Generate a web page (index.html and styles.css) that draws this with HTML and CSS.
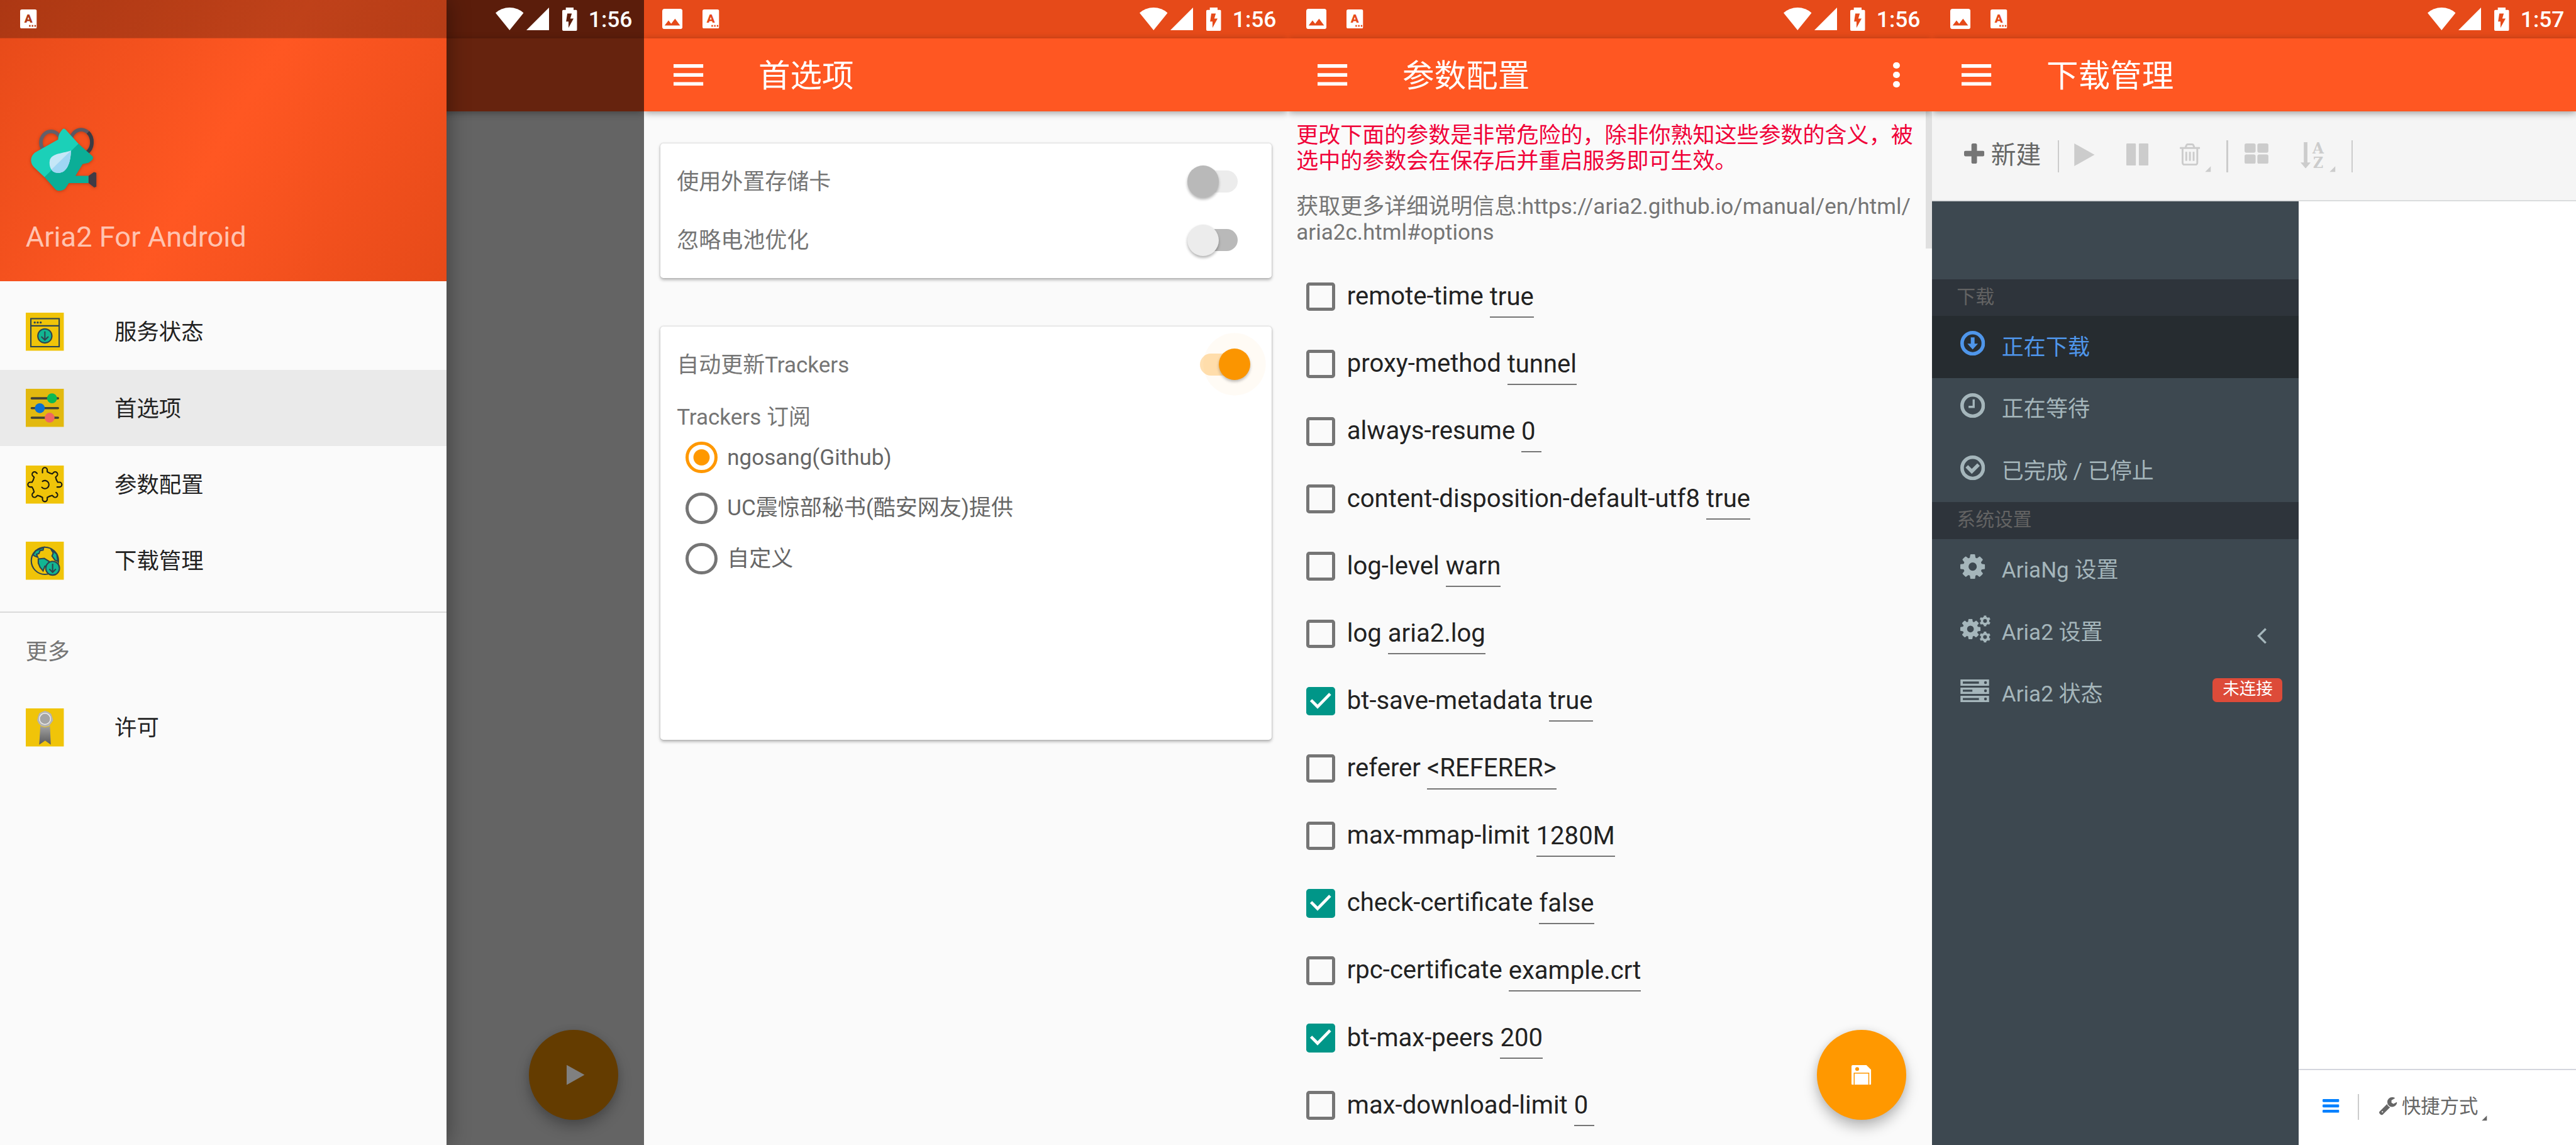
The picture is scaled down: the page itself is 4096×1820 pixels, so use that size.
FILE: index.html
```html
<!DOCTYPE html>
<html lang="zh-CN">
<head>
<meta charset="utf-8">
<title>Aria2 For Android</title>
<link rel="stylesheet" href="styles.css">
</head>
<body>
<svg class="sprite" aria-hidden="true">
  <symbol id="i-image" viewBox="0 0 34 34"><path fill-rule="evenodd" d="M4 0H30a4 4 0 0 1 4 4V30a4 4 0 0 1-4 4H4a4 4 0 0 1-4-4V4a4 4 0 0 1 4-4ZM4 28H30L21.500 16.500 15 25 10.500 19.500Z"/></symbol>
  <symbol id="i-lang" viewBox="0 0 28 32"><rect width="28" height="32" rx="3" fill="#fff"/><text x="14" y="22.500" text-anchor="middle" font-family="Roboto" font-weight="900" font-size="20" fill="currentColor">A</text><path fill="currentColor" d="M15 26h2.500v3H15zM19.500 26H22v3h-2.500zM24 26h2.500v3H24z"/></symbol>
  <symbol id="i-wifi" viewBox="0 0 47 38"><path d="M23.500 38 0 9Q10 0 23.500 0T47 9Z"/></symbol>
  <symbol id="i-signal" viewBox="0 0 38 38"><path d="M38 0V38H0Z"/></symbol>
  <symbol id="i-battery" viewBox="0 0 25 39"><path fill-rule="evenodd" d="M6 0H19V4H23a2 2 0 0 1 2 2V37a2 2 0 0 1-2 2H2a2 2 0 0 1-2-2V6A2 2 0 0 1 2 4H6ZM16 10H8.500L6.500 23.500H10.500V34L19 18.500H13.500Z"/></symbol>
  <symbol id="i-menu" viewBox="0 0 50 36"><path d="M0 0H50V6H0ZM0 15H50V21H0ZM0 30H50V36H0Z"/></symbol>
  <symbol id="i-logo" viewBox="50 210 116 116">
    <g fill="none" stroke-width="6"><ellipse cx="86" cy="239" rx="17" ry="18.500" stroke="#625f69"/><ellipse cx="136.500" cy="238" rx="18" ry="20.500" stroke="#5b5862"/><path d="M148 222Q155 229 154.500 240T146 256" stroke="#3c3b43"/></g>
    <path fill="#1bd0b8" d="M98 232Q99 225 102 221L105 217Q108 214 111 218L132 241 156 265 75 297 58 281Q52 275 52.500 268T59 256L98 234Z"/>
    <path fill="#0bae97" d="M132 241 155.500 262Q158 266 154 269L149 273 139 275 127 295H149V307H116L110 316Q106 320 99 320 95 320 92 316L75 297Z"/>
    <path fill="#403b45" d="M149 295 158 288.500 162 290V313L158.500 314.500 149 307Z"/>
    <path fill="#c5e7f7" d="M119.500 252.500C119 268 115 290 98 290 88 290 83 282 83.500 272 84 257 104 258 119.500 252.500Z"/>
    <path fill="#9fd6f4" d="M119.500 252.500C119 268 115 290 98 290 93 290 88 288 87 284Z"/>
  </symbol>
  <symbol id="i-service" viewBox="0 0 64 64"><rect width="64" height="64" fill="#f0c409"/><g fill="none" stroke="#2d4550" stroke-width="2.200"><rect x="8.500" y="10" width="47.500" height="47"/><path d="M8.500 22H56"/><circle cx="32" cy="39" r="11.800" fill="#12b592"/><path d="M32 31.500V45M26 40L32 46 38 40"/></g><g fill="#2d4550"><circle cx="15" cy="16.500" r="1.800"/><circle cx="20" cy="16.500" r="1.800"/><circle cx="25" cy="16.500" r="1.800"/></g></symbol>
  <symbol id="i-sliders" viewBox="0 0 64 64"><rect width="64" height="64" fill="#e2b90f"/><path d="M10 16H54M10 32.500H54M10 48.500H54" stroke="#424236" stroke-width="3.800" stroke-linecap="round"/><circle cx="44" cy="16" r="8.300" fill="#0db953"/><circle cx="23.500" cy="32.500" r="8.300" fill="#0b70cf"/><circle cx="40" cy="48.500" r="8.300" fill="#f0685f"/></symbol>
  <symbol id="i-gear" viewBox="0 0 64 64"><rect width="64" height="64" fill="#f0c409"/><g fill="none" stroke="#1a1a10" stroke-width="2.200" stroke-linecap="round" stroke-linejoin="round">
    <path d="M28 12V7.500a4 4 0 0 1 8 0V10.500L40 12.600"/>
    <path d="M24 12.600 28 10.500V7.500a4 4 0 0 1 8 0V10.500L40 12.600" transform="rotate(45 32 32)"/>
    <path d="M24 12.600 28 10.500V7.500a4 4 0 0 1 8 0V11.500" transform="rotate(90 32 32)"/>
    <path d="M28 9.500V7.500a4 4 0 0 1 8 0V10.500L40 12.600" transform="rotate(135 32 32)"/>
    <path d="M24 12.600 28 10.500V7.500a4 4 0 0 1 8 0V10.500L40 12.600" transform="rotate(180 32 32)"/>
    <path d="M24 12.600 28 10.500V7.500a4 4 0 0 1 8 0V10.500L40 12.600" transform="rotate(225 32 32)"/>
    <path d="M24 12.600 28 10.500V7.500a4 4 0 0 1 8 0V10.500L40 12.600" transform="rotate(270 32 32)"/>
    <path d="M24 12.600 28 10.500V7.500a4 4 0 0 1 8 0V9.500" transform="rotate(315 32 32)"/>
    <path d="M28 26.500A6.800 6.800 0 1 1 27 36.500"/></g></symbol>
  <symbol id="i-globe" viewBox="0 0 64 64"><rect width="64" height="64" fill="#f0c409"/><g stroke="#2d4550" stroke-width="2.200"><circle cx="32" cy="32" r="22.800" fill="none"/><path fill="#12b592" d="M12 22 17 15 30 9.500 29 14 24 15 22 20 18 21 20 26 15 24ZM21 29 31 28 39 33 38 40 32 41 29 49 24 43 21 36ZM42 12 52 21 54 33 49 31 44 24 46 19Z"/><circle cx="45" cy="44.500" r="11.500" fill="#12b592"/><path fill="none" d="M45 37V51M39.500 46 45 51.500 50.500 46"/></g></symbol>
  <symbol id="i-license" viewBox="0 0 64 64"><defs><linearGradient id="rib" x1="0" y1="0" x2="0" y2="1"><stop offset="0" stop-color="#a5a5a5"/><stop offset="1" stop-color="#5a5a5a"/></linearGradient></defs><rect width="64" height="64" fill="#f0c409"/><path fill="url(#rib)" d="M24.500 28H40.500L42 61 32.500 54 22.500 61Z"/><path fill="#b5b5b5" stroke="#f0c409" d="M32 3.500 38 5.500 43 9 45 15 46.500 20 43 25 39 30 32 31.500 26 30 21 25 18.500 20 20 14 22 8 27 5.500Z"/><circle cx="32.200" cy="17.500" r="9.300" fill="#a4a4a4" stroke="#ececec" stroke-width="1.600"/></symbol>
  <symbol id="i-play" viewBox="0 0 34 38"><path d="M0 0 34 19 0 38Z"/></symbol>
  <symbol id="i-pause" viewBox="0 0 37 37"><rect width="16" height="37" rx="1.500"/><rect x="21" width="16" height="37" rx="1.500"/></symbol>
  <symbol id="i-save" viewBox="0 0 33 33"><path d="M2 0H25L33 8V31a2 2 0 0 1-2 2H2a2 2 0 0 1-2-2V2A2 2 0 0 1 2 0Z"/><circle cx="9.500" cy="6.500" r="3.200" fill="#ff9800"/><path d="M4.500 33V13.500H29V33" fill="none" stroke="#ff9800" stroke-width="1.600"/></symbol>
  <symbol id="i-check" viewBox="0 0 48 48"><path d="M8 22 19 33 40 11.500" fill="none" stroke="#fff" stroke-width="5"/></symbol>
  <symbol id="i-plus" viewBox="192 128 1408 1408"><path d="M1600 736v192q0 40-28 68t-68 28h-416v416q0 40-28 68t-68 28h-192q-40 0-68-28t-28-68v-416h-416q-40 0-68-28t-28-68v-192q0-40 28-68t68-28h416v-416q0-40 28-68t68-28h192q40 0 68 28t28 68v416h416q40 0 68 28t28 68z"/></symbol>
  <symbol id="i-trash" viewBox="192 128 1408 1536"><path d="M704 736v576q0 14-9 23t-23 9h-64q-14 0-23-9t-9-23v-576q0-14 9-23t23-9h64q14 0 23 9t9 23zm256 0v576q0 14-9 23t-23 9h-64q-14 0-23-9t-9-23v-576q0-14 9-23t23-9h64q14 0 23 9t9 23zm256 0v576q0 14-9 23t-23 9h-64q-14 0-23-9t-9-23v-576q0-14 9-23t23-9h64q14 0 23 9t9 23zm128 724v-948h-896v948q0 22 7 40.500t14.500 27 10.500 8.500h832q3 0 10.500-8.500t14.500-27 7-40.500zm-672-1076h448l-48-117q-7-9-17-11h-317q-10 2-17 11zm928 32v64q0 14-9 23t-23 9h-96v948q0 83-47 143.500t-113 60.500h-832q-66 0-113-58.500t-47-141.500v-952h-96q-14 0-23-9t-9-23v-64q0-14 9-23t23-9h309l70-167q15-37 54-63t79-26h320q40 0 79 26t54 63l70 167h309q14 0 23 9t9 23z"/></symbol>
  <symbol id="i-grid" viewBox="0 0 40 34"><rect width="18.500" height="15.500" rx="3"/><rect x="21.500" width="18.500" height="15.500" rx="3"/><rect y="18.500" width="18.500" height="15.500" rx="3"/><rect x="21.500" y="18.500" width="18.500" height="15.500" rx="3"/></symbol>
  <symbol id="i-sort" viewBox="0 0 40 44"><path d="M5.500 0H11.500V34H17L8.500 44 0 34H5.500Z"/><text x="29.500" y="19" text-anchor="middle" font-family="DejaVu Serif" font-weight="700" font-size="25" textLength="19" lengthAdjust="spacingAndGlyphs">A</text><text x="29.500" y="43" text-anchor="middle" font-family="DejaVu Serif" font-weight="700" font-size="25" textLength="17" lengthAdjust="spacingAndGlyphs">Z</text></symbol>
  <symbol id="i-caret" viewBox="0 0 10 10"><path d="M10 0V10H0Z"/></symbol>
  <symbol id="i-cog" viewBox="128 128 1536 1536"><path d="M1152 896q0-106-75-181t-181-75-181 75-75 181 75 181 181 75 181-75 75-181zm512-109v222q0 12-8 23t-20 13l-185 28q-19 54-39 91 35 50 107 138 10 12 10 25t-9 23q-27 37-99 108t-94 71q-12 0-26-9l-138-108q-44 23-91 38-16 136-29 186-7 28-36 28h-222q-14 0-24.500-8.500t-11.500-21.500l-28-184q-49-16-90-37l-141 107q-10 9-25 9-14 0-25-11-126-114-165-168-7-10-7-23 0-12 8-23 15-21 51-66.500t54-70.500q-27-50-41-99l-183-27q-13-2-21-12.500t-8-23.500v-222q0-12 8-23t19-13l186-28q14-46 39-92-40-57-107-138-10-12-10-24 0-10 9-23 26-36 98.500-107.500t94.500-71.500q13 0 26 10l138 107q44-23 91-38 16-136 29-186 7-28 36-28h222q14 0 24.500 8.500t11.500 21.500l28 184q49 16 90 37l142-107q9-9 24-9 13 0 25 10 129 119 165 170 7 8 7 22 0 12-8 23-15 21-51 66.500t-54 70.500q26 50 41 98l183 28q13 2 21 12.500t8 23.500z"/></symbol>
  <symbol id="i-cogs" viewBox="0 0 52 46"><use href="#i-cog" x="0" y="6" width="34" height="34"/><g id="minicog"><circle cx="41.500" cy="9.500" r="5.200" fill="none" stroke="currentColor" stroke-width="4"/><path d="M41.500 9.500m-8 -4.600 16 9.200M41.500 9.500m-8 4.600 16-9.200M41.500 .500V18.500" stroke="currentColor" stroke-width="4.200" stroke-dasharray="3.400 11.600"/></g><use href="#minicog" y="27"/></symbol>
  <symbol id="i-server" viewBox="0 0 48 38"><path fill-rule="evenodd" d="M0 0H48V10.500H0ZM4 3.500V7H31V3.500ZM0 13.700H48V24.300H0ZM4 17.200V20.700H20V17.200ZM0 27.500H48V38H0ZM4 31V34.500H31V31Z"/><g class="led"><circle cx="42" cy="5.300" r="2.400"/><circle cx="42" cy="19" r="2.400"/><circle cx="42" cy="32.700" r="2.400"/></g></symbol>
  <symbol id="i-down" viewBox="0 0 42 42"><circle cx="21" cy="21" r="18" fill="none" stroke="currentColor" stroke-width="6"/><path d="M17.800 11H24.200V21.500H30L21 31.500 12 21.500H17.800Z"/></symbol>
  <symbol id="i-clock" viewBox="0 0 42 42"><circle cx="21" cy="21" r="18" fill="none" stroke="currentColor" stroke-width="6"/><path d="M22.700 10.500V23.200H14" fill="none" stroke="currentColor" stroke-width="3.600"/></symbol>
  <symbol id="i-done" viewBox="0 0 42 42"><circle cx="21" cy="21" r="18" fill="none" stroke="currentColor" stroke-width="6"/><path d="M11 18.500 19.500 27 31 15.500" fill="none" stroke="currentColor" stroke-width="6"/></symbol>
  <symbol id="i-chevron" viewBox="0 0 16 27"><path d="M14.500 1.500 2.500 13.500 14.500 25.500" fill="none" stroke="currentColor" stroke-width="3.600"/></symbol>
  <symbol id="i-bars" viewBox="0 0 28 23"><rect width="28" height="5" rx="1.500"/><rect y="9" width="28" height="5" rx="1.500"/><rect y="18" width="28" height="5" rx="1.500"/></symbol>
  <symbol id="i-wrench" viewBox="85 128 1641 1643"><path d="M448 1472q0-26-19-45t-45-19-45 19-19 45 19 45 45 19 45-19 19-45zm644-420l-682 682q-37 37-90 37-52 0-91-37l-106-108q-38-36-38-90 0-53 38-91l681-681q39 98 114.500 173.500t173.500 114.500zm634-435q0 39-23 106-47 134-164.500 217.500t-258.500 83.500q-185 0-316.500-131.500t-131.500-316.500 131.500-316.500 316.500-131.500q58 0 121.500 16.500t107.500 46.500q16 11 16 28t-16 28l-293 169v224l193 107q5-3 79-48.500t135.500-81 70.500-35.500q15 0 23.500 10t8.500 25z"/></symbol>
</svg>

<main class="screens">

  <section class="phone phone-dim">
    <div class="dim-status"></div>
    <div class="dim-toolbar"></div>
    <div class="fab fab-dim"><svg class="fab-play"><use href="#i-play"/></svg></div>
    <aside class="drawer">
      <header class="drawer-head">
        <svg class="logo"><use href="#i-logo"/></svg>
        <div class="app-name">Aria2 For Android</div>
      </header>
      <nav class="drawer-nav">
        <a class="nav-item"><svg class="nav-icon"><use href="#i-service"/></svg><span>服务状态</span></a>
        <a class="nav-item selected"><svg class="nav-icon"><use href="#i-sliders"/></svg><span>首选项</span></a>
        <a class="nav-item"><svg class="nav-icon"><use href="#i-gear"/></svg><span>参数配置</span></a>
        <a class="nav-item"><svg class="nav-icon"><use href="#i-globe"/></svg><span>下载管理</span></a>
      </nav>
      <div class="nav-title">更多</div>
      <a class="nav-item"><svg class="nav-icon"><use href="#i-license"/></svg><span>许可</span></a>
    </aside>
    <div class="status status-over">
      <svg class="s-lang s-lang-first"><use href="#i-lang"/></svg>
      <span class="grow"></span>
      <svg class="s-wifi"><use href="#i-wifi"/></svg><svg class="s-signal"><use href="#i-signal"/></svg><svg class="s-battery"><use href="#i-battery"/></svg>
      <span class="clock">1:56</span>
    </div>
  </section>

  <section class="phone">
    <div class="status">
      <svg class="s-image"><use href="#i-image"/></svg><svg class="s-lang"><use href="#i-lang"/></svg>
      <span class="grow"></span>
      <svg class="s-wifi"><use href="#i-wifi"/></svg><svg class="s-signal"><use href="#i-signal"/></svg><svg class="s-battery"><use href="#i-battery"/></svg>
      <span class="clock">1:56</span>
    </div>
    <header class="toolbar"><svg class="menu"><use href="#i-menu"/></svg><h1>首选项</h1></header>
    <div class="prefs">
      <div class="card card-switches">
        <div class="pref"><span>使用外置存储卡</span><i class="switch disabled"></i></div>
        <div class="pref"><span>忽略电池优化</span><i class="switch"></i></div>
      </div>
      <div class="card card-trackers">
        <div class="pref"><span>自动更新Trackers</span><i class="switch on"></i></div>
        <div class="radio-title">Trackers 订阅</div>
        <label class="radio checked"><i></i>ngosang(Github)</label>
        <label class="radio"><i></i>UC震惊部秘书(酷安网友)提供</label>
        <label class="radio"><i></i>自定义</label>
      </div>
    </div>
  </section>

  <section class="phone">
    <div class="status">
      <svg class="s-image"><use href="#i-image"/></svg><svg class="s-lang"><use href="#i-lang"/></svg>
      <span class="grow"></span>
      <svg class="s-wifi"><use href="#i-wifi"/></svg><svg class="s-signal"><use href="#i-signal"/></svg><svg class="s-battery"><use href="#i-battery"/></svg>
      <span class="clock">1:56</span>
    </div>
    <header class="toolbar"><svg class="menu"><use href="#i-menu"/></svg><h1>参数配置</h1><span class="overflow"><i></i><i></i><i></i></span></header>
    <div class="params">
      <div class="scrollbar"></div>
      <p class="warning">更改下面的参数是非常危险的，除非你熟知这些参数的含义，被<br>选中的参数会在保存后并重启服务即可生效。</p>
      <p class="info">获取更多详细说明信息:https://aria2.github.io/manual/en/html/<br>aria2c.html#options</p>
      <div class="param"><i class="box"></i><span>remote-time</span><b>true</b></div>
      <div class="param"><i class="box"></i><span>proxy-method</span><b>tunnel</b></div>
      <div class="param"><i class="box"></i><span>always-resume</span><b>0</b></div>
      <div class="param"><i class="box"></i><span>content-disposition-default-utf8</span><b>true</b></div>
      <div class="param"><i class="box"></i><span>log-level</span><b>warn</b></div>
      <div class="param"><i class="box"></i><span>log</span><b>aria2.log</b></div>
      <div class="param"><svg class="box on"><use href="#i-check"/></svg><span>bt-save-metadata</span><b>true</b></div>
      <div class="param"><i class="box"></i><span>referer</span><b>&lt;REFERER&gt;</b></div>
      <div class="param"><i class="box"></i><span>max-mmap-limit</span><b>1280M</b></div>
      <div class="param"><svg class="box on"><use href="#i-check"/></svg><span>check-certificate</span><b>false</b></div>
      <div class="param"><i class="box"></i><span>rpc-certificate</span><b>example.crt</b></div>
      <div class="param"><svg class="box on"><use href="#i-check"/></svg><span>bt-max-peers</span><b>200</b></div>
      <div class="param"><i class="box"></i><span>max-download-limit</span><b>0</b></div>
    </div>
    <div class="fab"><svg class="fab-save"><use href="#i-save"/></svg></div>
  </section>

  <section class="phone">
    <div class="status">
      <svg class="s-image"><use href="#i-image"/></svg><svg class="s-lang"><use href="#i-lang"/></svg>
      <span class="grow"></span>
      <svg class="s-wifi"><use href="#i-wifi"/></svg><svg class="s-signal"><use href="#i-signal"/></svg><svg class="s-battery"><use href="#i-battery"/></svg>
      <span class="clock">1:57</span>
    </div>
    <header class="toolbar"><svg class="menu"><use href="#i-menu"/></svg><h1>下载管理</h1></header>
    <div class="actions">
      <svg class="a-plus"><use href="#i-plus"/></svg><span class="a-new">新建</span>
      <i class="sep"></i>
      <svg class="a-play"><use href="#i-play"/></svg>
      <svg class="a-pause"><use href="#i-pause"/></svg>
      <svg class="a-trash"><use href="#i-trash"/></svg><svg class="a-caret"><use href="#i-caret"/></svg>
      <i class="sep sep-2"></i>
      <svg class="a-grid"><use href="#i-grid"/></svg>
      <svg class="a-sort"><use href="#i-sort"/></svg><svg class="a-caret"><use href="#i-caret"/></svg>
      <i class="sep sep-3"></i>
    </div>
    <div class="manager">
      <aside class="side">
        <div class="side-title">下载</div>
        <a class="side-item active"><svg class="round"><use href="#i-down"/></svg><span>正在下载</span></a>
        <a class="side-item"><svg class="round"><use href="#i-clock"/></svg><span>正在等待</span></a>
        <a class="side-item"><svg class="round"><use href="#i-done"/></svg><span>已完成 / 已停止</span></a>
        <div class="side-title">系统设置</div>
        <a class="side-item"><svg class="round"><use href="#i-cog"/></svg><span>AriaNg 设置</span></a>
        <a class="side-item"><svg class="cogs"><use href="#i-cogs"/></svg><span>Aria2 设置</span><svg class="chevron"><use href="#i-chevron"/></svg></a>
        <a class="side-item"><svg class="server"><use href="#i-server"/></svg><span>Aria2 状态</span><em class="badge">未连接</em></a>
      </aside>
      <div class="content">
        <footer class="bottom">
          <svg class="b-bars"><use href="#i-bars"/></svg><i class="sep"></i>
          <svg class="b-wrench"><use href="#i-wrench"/></svg><span>快捷方式</span><svg class="b-caret"><use href="#i-caret"/></svg>
        </footer>
      </div>
    </div>
  </section>

</main>
</body>
</html>
```
FILE: styles.css
```css
/* 1rem is 100 device units; a phone screen is 10.8rem by 19.2rem */
html { font-size: 94.8148px; }
* { box-sizing: border-box; }
body {
  margin: 0;
  height: 1820px;
  overflow: hidden;
  background: #fafafa;
  font-family: Roboto, "Noto Sans CJK SC", sans-serif;
  font-size: .3695rem;
  line-height: 1.172;
  color: #222;
}
svg { display: block; flex: none; fill: currentColor; overflow: visible; }
i, em { font-style: normal; }
.sprite { position: absolute; width: 0; height: 0; }
.grow { flex: 1; }

.screens { display: flex; width: 43.2rem; height: 19.2rem; }
.phone {
  position: relative;
  display: flex;
  flex-direction: column;
  flex: none;
  width: 10.8rem;
  height: 19.2rem;
  overflow: hidden;
  background: #fafafa;
}

/* status bar */
.status {
  display: flex;
  align-items: center;
  flex: none;
  height: .64rem;
  padding: 0 .19rem 0 .31rem;
  background: #e64a19;
  color: #fff;
}
.status-over {
  position: absolute;
  top: 0;
  left: 0;
  width: 100%;
  background: none;
}
.s-image { width: .34rem; height: .34rem; }
.s-lang { width: .28rem; height: .32rem; margin-left: .33rem; color: #e64a19; }
.s-lang-first { margin-left: .03rem; color: #b03a17; }
.s-wifi { width: .47rem; height: .38rem; }
.s-signal { width: .38rem; height: .38rem; margin-left: .05rem; }
.s-battery { width: .25rem; height: .39rem; margin-left: .22rem; margin-right: .19rem; }
.clock { width: .74rem; font-size: .3733rem; font-weight: 500; margin-top: .02rem; white-space: nowrap; }

/* toolbar */
.toolbar {
  position: relative;
  z-index: 1;
  display: flex;
  align-items: center;
  flex: none;
  height: 1.23rem;
  padding: 0 .54rem 0 .5rem;
  background: #ff5722;
  color: #fff;
  box-shadow: 0 .03rem .12rem rgba(0, 0, 0, .4);
}
.menu { width: .5rem; height: .36rem; }
.toolbar h1 { margin: .04rem auto 0 .92rem; font-size: .5333rem; font-weight: 400; }
.overflow { display: flex; flex-direction: column; gap: .05rem; }
.overflow i { width: .11rem; height: .11rem; border-radius: 50%; background: #fff; }

/* floating button */
.fab {
  position: absolute;
  left: 8.87rem;
  top: 17.27rem;
  display: flex;
  align-items: center;
  justify-content: center;
  width: 1.5rem;
  height: 1.5rem;
  border-radius: 50%;
  background: #ff9800;
  color: #fff;
  box-shadow: 0 .12rem .22rem rgba(0, 0, 0, .26), 0 0 .12rem rgba(0, 0, 0, .08);
}
.fab-save { width: .33rem; height: .33rem; }
.fab-dim { background: #643c00; color: #808080; }
.fab-play { width: .3rem; height: .37rem; margin-left: .06rem; }

/* drawer screen */
.phone-dim { background: #646464; }
.dim-status { flex: none; height: .64rem; background: #5b1d0b; }
.dim-toolbar { flex: none; height: 1.23rem; background: #66230e; box-shadow: 0 .03rem .12rem rgba(0, 0, 0, .35); }
.drawer {
  position: absolute;
  left: 0;
  top: 0;
  width: 7.49rem;
  height: 100%;
  background: #fafafa;
  box-shadow: 0 0 .36rem rgba(0, 0, 0, .4);
}
.drawer-head {
  display: flex;
  flex-direction: column;
  height: 4.71rem;
  padding: 2.1rem .43rem 0;
  background:
    linear-gradient(rgba(0, 0, 0, .25), rgba(0, 0, 0, .25)) 0 0 / 100% .64rem no-repeat,
    linear-gradient(122.2deg, #e64a19, #ff5722 50%, #e64a19);
}
.logo { width: 1.16rem; height: 1.16rem; margin-left: .07rem; filter: drop-shadow(0 .02rem .03rem rgba(0, 0, 0, .25)); }
.app-name { margin-top: .43rem; font-size: .477rem; color: #ffc3b0; }
.drawer-nav { padding: .21rem 0; border-bottom: .03rem solid #dadada; }
.nav-item { display: flex; align-items: center; height: 1.28rem; padding-left: .43rem; font-size: .3733rem; }
.nav-item span { margin-top: .04rem; }
.nav-item.selected { background: #eaeaea; }
.nav-icon { width: .64rem; height: .64rem; margin-right: .85rem; }
.nav-title { height: 1.28rem; padding-left: .43rem; line-height: 1.32rem; color: #757575; }

/* preferences */
.prefs { display: flex; flex-direction: column; gap: .81rem; padding: .53rem .27rem 0; color: #757575; }
.card {
  border-radius: .05rem;
  background: #fff;
  box-shadow: 0 .03rem .06rem rgba(0, 0, 0, .28), 0 0 .03rem rgba(0, 0, 0, .18);
}
.card-switches { height: 2.26rem; padding: .15rem .28rem 0; }
.card-trackers { height: 6.93rem; padding: .145rem .28rem 0; }
.pref { display: flex; align-items: center; justify-content: space-between; height: .985rem; }
.pref span { margin-top: .025rem; }
.switch {
  position: relative;
  width: .74rem;
  height: .37rem;
  margin-right: .29rem;
  border-radius: .185rem;
  background: #b9b9b9;
}
.switch::after {
  content: "";
  position: absolute;
  left: -.11rem;
  top: -.08rem;
  width: .53rem;
  height: .53rem;
  border-radius: 50%;
  background: #ececec;
  box-shadow: 0 .03rem .05rem rgba(0, 0, 0, .3);
}
.switch.disabled { background: #ececec; }
.switch.disabled::after { background: #b9b9b9; }
.switch.on { margin-right: .19rem; background: #ffe0b2; }
.switch.on::after {
  left: .32rem;
  background: #fb9500;
  box-shadow: 0 .03rem .05rem rgba(0, 0, 0, .25), 0 0 0 .26rem rgba(255, 152, 0, .04);
}
.radio-title { height: .7rem; margin-top: .06rem; line-height: .7rem; }
.radio { display: flex; align-items: center; height: .85rem; color: #666; }
.radio-title + .radio { margin-top: -.115rem; }
.radio i {
  width: .53rem;
  height: .53rem;
  margin: 0 .165rem 0 .15rem;
  border: .055rem solid #757575;
  border-radius: 50%;
}
.radio.checked i { border-color: #ff9800; background: radial-gradient(circle, #ff9800 .13rem, #fff .142rem); }

/* parameters */
.params { position: relative; padding: .185rem 0 0 .14rem; }
.params p { margin: 0; line-height: .437rem; white-space: nowrap; }
.params .warning { color: #f00038; }
.params .info { margin-top: .33rem; margin-bottom: .29rem; color: #757575; line-height: .43rem; }
.scrollbar { position: absolute; right: 0; top: 0; width: .11rem; height: 2.3rem; background: #e0e0e0; }
.param { display: flex; align-items: center; height: 1.13rem; padding-left: .17rem; font-size: .4225rem; }
.param .box { flex: none; width: .48rem; height: .48rem; margin-right: .2rem; border: .055rem solid #757575; border-radius: .05rem; }
.param .box.on { border: 0; background: #009688; }
.param b {
  min-width: .34rem;
  margin-left: .105rem;
  padding: .105rem 0 .075rem;
  border-bottom: .03rem solid #757575;
  font-weight: 400;
}

/* download manager */
.actions {
  display: flex;
  align-items: flex-start;
  flex: none;
  height: 1.5rem;
  padding: .54rem 0 0 .54rem;
  border-bottom: .03rem solid #dadcdd;
  background: #f5f5f5;
  color: #ccc;
}
.sep { flex: none; width: .025rem; height: .54rem; margin-top: -.06rem; background: #ccc; }
.a-plus { width: .34rem; height: .34rem; color: #757575; }
.a-new { width: .84rem; margin: -.05rem .275rem 0 .11rem; font-size: .42rem; color: #666; }
.a-play { width: .345rem; height: .38rem; margin-left: .25rem; }
.a-pause { width: .37rem; height: .37rem; margin-left: .53rem; }
.a-trash { width: .34rem; height: .37rem; margin-left: .535rem; }
.a-caret { width: .1rem; height: .1rem; margin: .37rem 0 0 .08rem; }
.sep-2 { margin-left: .26rem; margin-right: .28rem; }
.a-grid { width: .4rem; height: .34rem; }
.a-sort { width: .4rem; height: .44rem; margin: -.03rem 0 0 .54rem; }
.sep-3 { margin-left: .27rem; }

.manager { display: flex; flex: 1; background: #fff; }
.side { width: 6.15rem; padding-top: 1.31rem; background: #3d4850; color: #a5b6bb; }
.side-title {
  height: .62rem;
  padding-left: .415rem;
  background: #2e343b;
  color: #636363;
  font-size: .315rem;
  line-height: .6rem;
}
.side-item { display: flex; align-items: center; height: 1.04rem; padding-left: .48rem; }
.side-item span { width: 3.5rem; margin-top: .01rem; white-space: nowrap; }
.side-item.active { background: #262c30; color: #4f96ea; }
.round { width: .415rem; height: .415rem; margin: -.12rem .275rem 0 0; }
.cogs { width: .52rem; height: .46rem; margin: -.1rem .17rem 0 0; }
.server { width: .485rem; height: .38rem; margin: -.12rem .205rem 0 0; }
.led { fill: #3d4850; }
.chevron { width: .16rem; height: .27rem; margin: .13rem 0 0 .78rem; }
.badge {
  width: 1.17rem;
  height: .4rem;
  margin: -.14rem 0 0 .04rem;
  border-radius: .07rem;
  background: #dd4b39;
  color: #fff;
  font-size: .28rem;
  line-height: .36rem;
  text-align: center;
}
.content { display: flex; flex: 1; flex-direction: column; justify-content: flex-end; }
.bottom {
  display: flex;
  align-items: center;
  height: 1.28rem;
  padding: 0 0 .05rem .4rem;
  border-top: .03rem solid #d4d6de;
  color: #666;
  font-size: .32rem;
}
.bottom .sep { height: .43rem; margin: .02rem 0 0 .31rem; }
.b-bars { width: .28rem; height: .23rem; color: #0080ff; }
.b-wrench { width: .3rem; height: .3rem; margin: 0 .08rem 0 .335rem; }
.b-caret { width: .09rem; height: .09rem; margin: .4rem 0 0 .06rem; }
```
